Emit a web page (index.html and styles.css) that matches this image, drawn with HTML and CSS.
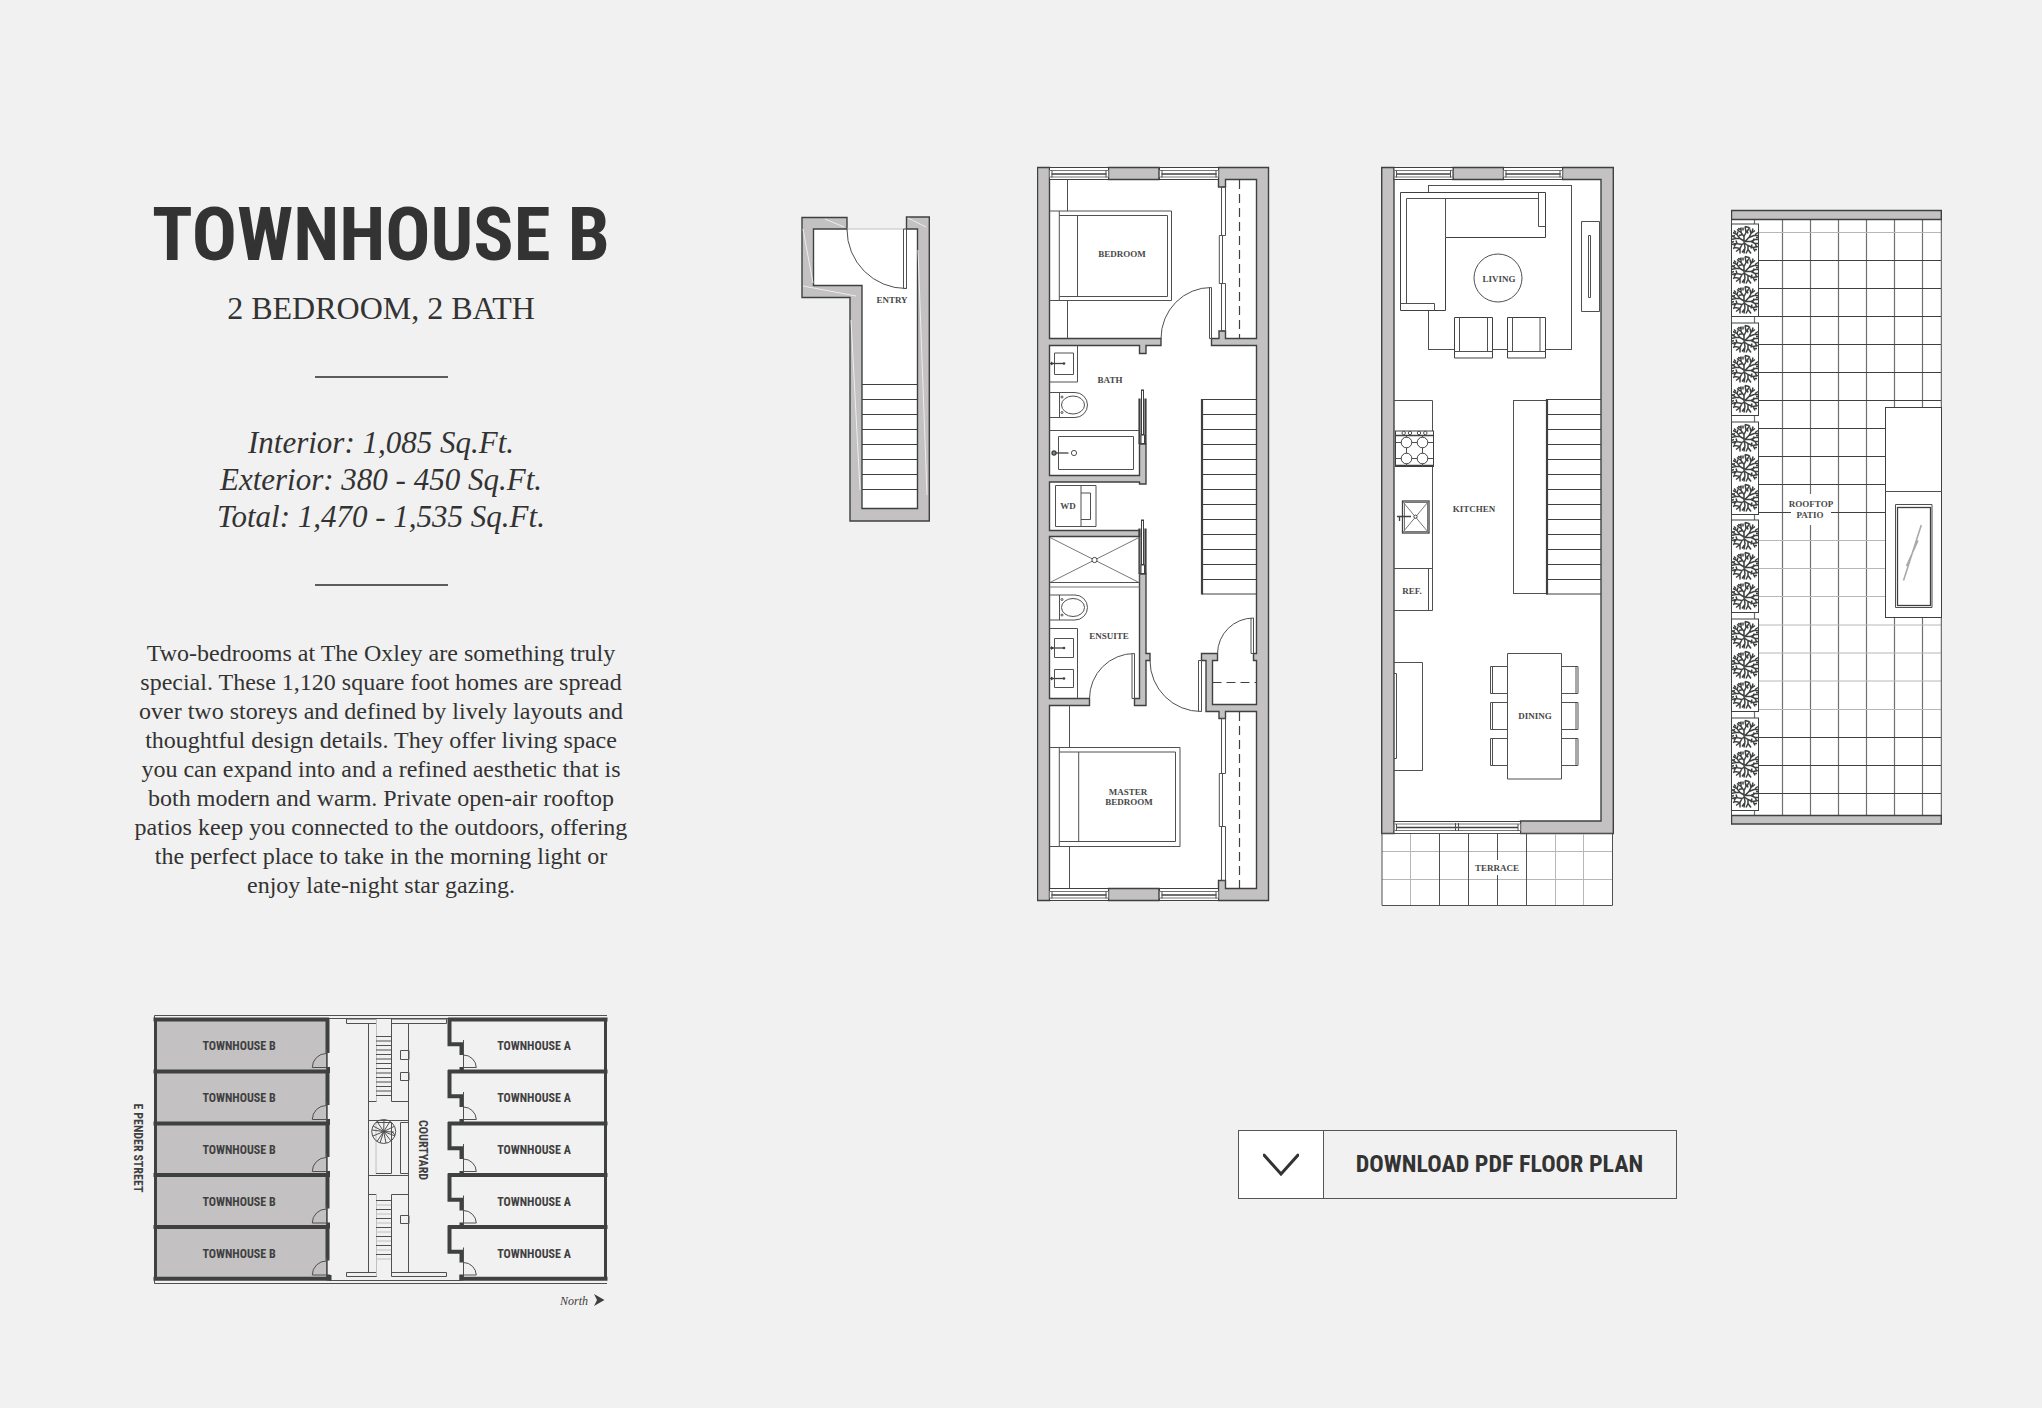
FILE: index.html
```html
<!DOCTYPE html>
<html lang="en">
<head>
<meta charset="utf-8">
<meta name="viewport" content="width=device-width, initial-scale=1">
<title>Townhouse B – The Oxley</title>
<link rel="stylesheet" href="styles.css">
</head>
<body>
<main class="page">
  <section class="summary">
    <h1 class="title">TOWNHOUSE B</h1>
    <p class="subtitle">2 BEDROOM, 2 BATH</p>
    <hr class="rule">
    <ul class="areas">
      <li>Interior: 1,085 Sq.Ft.</li>
      <li>Exterior: 380 - 450 Sq.Ft.</li>
      <li>Total: 1,470 - 1,535 Sq.Ft.</li>
    </ul>
    <hr class="rule">
    <p class="description">Two-bedrooms at The Oxley are something truly special. These 1,120 square foot homes are spread over two storeys and defined by lively layouts and thoughtful design details. They offer living space you can expand into and a refined aesthetic that is both modern and warm. Private open-air rooftop patios keep you connected to the outdoors, offering the perfect place to take in the morning light or enjoy late-night star gazing.</p>

    <svg class="sitemap" viewBox="100 1010 562 300" role="img" aria-label="Site map">
      <defs>
        <g id="unit-b">
          <rect class="wall" x="156" y="1020" width="171" height="51"/>
          <path class="heavy" d="M153.500 1019.500H329M327.500 1018V1053M328 1067V1073"/>
          <path class="thin" d="M326.500 1050V1070M312.300 1067.500H327M312.300 1067.500A14 14 0 0 1 326.500 1053.500"/>
          <text class="unit" x="239" y="1050">TOWNHOUSE B</text>
        </g>
        <g id="unit-a">
          <path class="heavy" d="M448 1019.500H607.500M449.500 1018V1044.300H461.500V1055M461.500 1067V1073"/>
          <path class="thin" d="M463.500 1040V1071M463.500 1067.500H476.300A13 13 0 0 0 463.500 1055"/>
          <text class="unit" x="534" y="1050">TOWNHOUSE A</text>
        </g>
      </defs>
      <path class="thin" d="M607 1015.500H154.500V1283.500H607M329 1018.500H448M329 1280.500H460"/>
      <use href="#unit-b"/><use href="#unit-b" y="52"/><use href="#unit-b" y="104"/><use href="#unit-b" y="155.500"/><use href="#unit-b" y="207.500"/>
      <use href="#unit-a"/><use href="#unit-a" y="52"/><use href="#unit-a" y="104"/><use href="#unit-a" y="155.500"/><use href="#unit-a" y="207.500"/>
      <path class="heavy" d="M153.500 1278.700H329.500V1275M607.500 1278.700H461.500V1275"/>
      <path class="side" d="M155.500 1018V1280M605.500 1018V1280"/>
      <path class="thin" d="M346.500 1019H376.500V1023.500H346.500ZM391.500 1019H446.500V1023.500H391.500ZM346.500 1272.500H376.500V1276.500H346.500ZM391.500 1272.500H446.500V1276.500H391.500Z"/>
      <path class="thin" d="M368.500 1023.500V1272.500M408.500 1023.500V1272.500M391.500 1019V1101.500M391.500 1194.500V1276M368.500 1101.500H376.500M391.500 1101.500H408.500M368.500 1120.500H408.500M368.500 1175.500H408.500M368.500 1194.500H376.500M391.500 1194.500H408.500"/>
      <path class="faint" d="M376.500 1019V1101M376.500 1194V1276M376 1205H391M376 1214H391M376 1223H391M376 1232H391M376 1241H391M376 1250H391M376 1259H391M376 1122.500V1173.500"/>
      <path class="thin" d="M376 1036.500H391M376 1041H391M376 1045.500H391M376 1050H391M376 1054.500H391M376 1059H391M376 1063.500H391M376 1068.500H391M376 1073H391M376 1077.500H391M376 1082H391M376 1086.500H391M376 1091H391M376 1095.500H391M376 1200.500H391M376 1209.500H391M376 1218.500H391M376 1227.500H391M376 1236.500H391M376 1245.500H391M376 1254.500H391"/>
      <path class="thin" d="M400.500 1050.500H409V1059.500H400.500ZM400.500 1072.500H409V1080.500H400.500ZM400.500 1215.500H409V1223.500H400.500ZM400.500 1122.500H408.500V1173.500H400.500ZM376 1122.500H391.500V1173.500H376"/>
      <circle class="thin" cx="383.700" cy="1131.500" r="12"/>
      <path class="thin" d="M383.700 1131.500L384 1119.500M383.700 1131.500L390 1121.500M383.700 1131.500L377 1121.500M383.700 1131.500L373 1126M383.700 1131.500L372 1130M383.700 1131.500L373 1136M383.700 1131.500L377 1141.500M383.700 1131.500L380 1143M383.700 1131.500L386 1143M383.700 1131.500L391 1141M383.700 1131.500L395 1136M383.700 1131.500L394 1132M383.700 1131.500L394 1126.500M391 1131L395 1135"/>
      <text class="unit" transform="translate(418.500 1150) rotate(90)">COURTYARD</text>
      <text class="unit" transform="translate(134 1148) rotate(90)">E PENDER STREET</text>
      <text class="north" x="574" y="1305">North</text>
      <path class="ink" d="M594 1294L604.500 1300L594 1306L597 1300Z"/>
    </svg>
  </section>

  <section class="floors">
    <div class="plans">
      <svg class="plan plan-entry" viewBox="801 160 129 750" role="img" aria-label="Entry level">
        <path class="floor" d="M813 229H918V509H862V285.500H813Z"/>
        <path class="wall" d="M802 217.500H847V229H813.500V285.500H862V508.500H917.500V229H906.500V217H929.300V521H850V297.500H802Z"/>
        <path class="glint" d="M825 219L844 227M908 218L926 227M803 229L813 283M803 286L856 296M851 320L860 490M918 250L927 495"/>
        <path class="faint" d="M847 229H906"/>
        <path class="thin" d="M847 229A59 59 0 0 0 906.500 288.500M903.500 229H906.500V288.500H903.500Z"/>
        <path class="step" d="M862 384.500H917.500M862 399.500H917.500M862 414.500H917.500M862 429.500H917.500M862 444.500H917.500M862 459.500H917.500M862 474.500H917.500M862 489.500H917.500"/>
        <text class="room" x="892" y="303">ENTRY</text>
      </svg>

      <svg class="plan plan-lower" viewBox="1037 160 237 750" role="img" aria-label="Bedroom level">
        <defs>
          <g id="window">
            <rect class="pane" x="0" y="0" width="59" height="12"/>
            <rect class="hair" x="0" y="3" width="59" height="6.500"/>
            <path class="line" d="M2 6.500H57"/>
            <path class="thin" d="M2.500 3V10M56.500 3V10"/>
          </g>
          <g id="toilet">
            <path class="thin" d="M1049.500 392.500H1075A12.500 12.500 0 0 1 1075 417.500H1049.500M1059.500 392.500V417.500"/>
            <ellipse class="thin" cx="1073" cy="405" rx="11.500" ry="9"/>
            <circle class="thin" cx="1062" cy="397" r="1"/><circle class="thin" cx="1062" cy="412.500" r="1"/>
          </g>
          <g id="faucet">
            <path class="line" d="M0 0H14"/><path class="ink" d="M1 -2L4 0L1 2Z"/><circle class="ink" cx="14" cy="0" r="1.300"/>
          </g>
          <g id="pocket">
            <path class="bar" d="M1139.500 398.500V444M1145.500 398.500V444"/>
            <rect class="obj" x="1141.500" y="390" width="2" height="45"/>
            <rect class="obj" x="1141" y="435" width="3.500" height="8.500"/>
          </g>
        </defs>
        <rect class="floor" x="1049" y="168" width="208" height="732"/>
        <path class="wall" d="M1037.500 167.500H1049.500V338.500H1161V345.500H1146V353.500H1139.500V345.500H1049.500V475.500H1139.500V444H1146V484H1139.500V482H1049.500V530.500H1139.500V536.500H1049.500V698.500H1089.500V705.500H1049.500V900.500H1037.500Z"/>
        <path class="wall" d="M1139.500 574H1146V653.500H1150V660.500H1146V705.500H1134.500V698.500H1139.500Z"/>
        <path class="wall" d="M1218.500 167.500H1268.500V900.500H1218.500V880.500H1225.500V888.500H1256.500V711.500H1225.500V718.500H1219V711.500H1206V660.500H1201.500V653.500H1217.500V660.500H1212.500V704.500H1256.500V660.500H1253.500V653.500H1256.500V345.500H1211.500V338.500H1219V331H1225.500V338.500H1256.500V179.500H1225.500V187H1218.500Z"/>
        <path class="wall" d="M1108.500 167.500H1159V179.500H1108.500ZM1108.500 888.500H1159V900.500H1108.500Z"/>
        <use href="#window" x="1049.500" y="167.500"/><use href="#window" x="1159.500" y="167.500"/>
        <use href="#window" x="1049.500" y="888.500"/><use href="#window" x="1159.500" y="888.500"/>
        <use href="#pocket"/><use href="#pocket" y="130"/>
        <path class="thin" d="M1067.500 179.500V211M1067.500 300.500V338.500M1049.500 211H1171.500V300.500H1049.500M1059.300 211V300.500M1059.300 215.500H1167.500V296.500H1059.300M1077.500 215.500V296.500"/>
        <path class="thin" d="M1069.500 705.500V747.500M1069.500 846.500V888.500M1049.500 747.500H1180V846.500H1049.500M1059.300 747.500V846.500M1059.300 752H1175.500V841.500H1059.300M1078.700 752V841.500"/>
        <path class="thin" d="M1221.500 187H1225.500V235.500H1221.500ZM1219.300 235.500H1222.500V283.500H1219.300ZM1221.500 283.500H1225.500V331H1221.500ZM1221.500 718.500H1225.500V773.500H1221.500ZM1219.300 773.500H1222.500V826.500H1219.300ZM1221.500 826.500H1225.500V880.500H1221.500Z"/>
        <path class="dash" d="M1239.500 180V338M1239.500 712V888M1212.500 682.500H1256"/>
        <path class="thin" d="M1161 338.500A50 51 0 0 1 1211.500 287.500V338.500H1209.500V287.500M1089.500 698.500A45 45 0 0 1 1134.500 653.500V698.500H1132V653.500M1150 660.500A51 51 0 0 0 1201.500 711.500V660.500H1198.500V711.500M1217.500 653.500A36 36 0 0 1 1253.500 618V653.500H1251V618"/>
        <path class="thin" d="M1049.500 382H1077.500V345.500M1054.500 353H1073.500V374.500H1054.500ZM1049.500 430.500H1139.500M1058.500 436.500H1133.500V469.500H1058.500Z"/>
        <use href="#toilet"/><use href="#toilet" y="202.500"/>
        <use href="#faucet" x="1050" y="363.500"/><use href="#faucet" x="1050" y="648"/><use href="#faucet" x="1050" y="678.500"/>
        <path class="line" d="M1052 453H1068.500"/><circle class="line" cx="1054" cy="453" r="2"/><circle class="thin" cx="1074" cy="453" r="2.600"/>
        <path class="thin" d="M1055.500 485.500H1096V526.500H1055.500ZM1081 485.500V526.500M1081 493H1090.500V519.500H1081"/>
        <path class="hair" d="M1050 537.500L1139 582.500M1139 537.500L1050 582.500M1049.500 587H1139.500"/>
        <path class="thin" d="M1049.500 582.500H1139.500V537"/>
        <circle class="obj" cx="1094.500" cy="560" r="2.600"/>
        <path class="thin" d="M1049.500 628.500H1077.500V698.500M1054.500 638.500H1073.500V657.500H1054.500ZM1054.500 669.500H1073.500V687.500H1054.500Z"/>
        <path class="step" d="M1201.500 399.500H1256.500M1202 414.500H1256.500M1202 429.500H1256.500M1202 444.500H1256.500M1202 459.500H1256.500M1202 474.500H1256.500M1202 489.500H1256.500M1202 504.500H1256.500M1202 519.500H1256.500M1202 534.500H1256.500M1202 549.500H1256.500M1202 564.500H1256.500M1202 579.500H1256.500M1202 594H1256.500"/>
        <path class="bar" d="M1202 399V594.500"/>
        <text class="room" x="1122" y="257">BEDROOM</text>
        <text class="room" x="1110" y="383">BATH</text>
        <text class="room" x="1068" y="509">WD</text>
        <text class="room" x="1109" y="639">ENSUITE</text>
        <text class="room" x="1128" y="795">MASTER</text>
        <text class="room" x="1129" y="805">BEDROOM</text>
      </svg>

      <svg class="plan plan-main" viewBox="1381 160 243 750" role="img" aria-label="Main level">
        <rect class="floor" x="1393" y="168" width="209" height="665"/>
        <rect class="floor" x="1382" y="833" width="231" height="72.500"/>
        <path class="wall" d="M1381.700 167.500H1394V833.500H1381.700ZM1453 167.500H1503.500V179.500H1453ZM1562.500 167.500H1613.300V833.500H1520.500V821H1601V179.500H1562.500Z"/>
        <use href="#window" x="1394" y="167.500"/><use href="#window" x="1503.500" y="167.500"/>
        <rect class="pane" x="1394" y="821.500" width="126.500" height="12"/>
        <rect class="hair" x="1394" y="824" width="126.500" height="6.500"/>
        <path class="line" d="M1396 827.500H1518"/>
        <path class="thin" d="M1396.500 824V831M1455.500 823V831M1458.500 823V831M1518 824V831"/>
        <rect class="thin" x="1428.500" y="185.500" width="143" height="164"/>
        <path class="obj" d="M1400.500 192.500H1545.500V237.500H1445.500V310.500H1400.500Z"/>
        <path class="thin" d="M1406.500 303.500V198.500H1538.500M1445.500 198.500V237.500M1538.500 192.500V226.500H1545.500M1400.500 303.500H1434.500V310.500"/>
        <circle class="thin" cx="1498" cy="278" r="24"/>
        <path class="thin" d="M1581.500 221.500H1599.500V311.500H1581.500ZM1588.500 235.500H1590.500V297.500H1588.500Z"/>
        <path class="obj" d="M1454.500 317.500H1492.500V358H1454.500ZM1507.500 317.500H1545.500V358H1507.500Z"/>
        <path class="thin" d="M1454.500 351.500H1492.500M1459.500 317.500V351.500M1487.500 317.500V351.500M1507.500 351.500H1545.500M1512.500 317.500V351.500M1540 317.500V351.500"/>
        <path class="thin" d="M1394 400.500H1432.500V610.500H1394M1394 568.500H1432.500M1428.500 568.500V610.500"/>
        <rect class="obj" x="1395.500" y="431" width="38" height="35.500"/>
        <path class="line" d="M1395.500 435.500H1433.500M1395.500 465.500H1433.500"/>
        <path class="thin" d="M1396 442.500H1433M1396 458.500H1433M1406.500 436V466M1422.500 436V466"/>
        <circle class="obj" cx="1406.500" cy="442.500" r="5.300"/><circle class="obj" cx="1422.500" cy="442.500" r="5.300"/><circle class="obj" cx="1406.500" cy="458.500" r="5.300"/><circle class="obj" cx="1422.500" cy="458.500" r="5.300"/>
        <circle class="thin" cx="1403.700" cy="433" r="1.700"/><circle class="thin" cx="1410" cy="433" r="1.700"/><circle class="thin" cx="1419" cy="433" r="1.700"/><circle class="thin" cx="1425.300" cy="433" r="1.700"/>
        <rect class="line" x="1402.500" y="501" width="26.500" height="32"/>
        <path class="hair" d="M1403 502L1428 532M1428 502L1403 532M1404.500 502.500H1427.500V531.500H1404.500Z"/>
        <circle class="obj" cx="1415.500" cy="516.700" r="1.600"/>
        <path class="line" d="M1397 516.500H1411M1399.500 517V521"/>
        <rect class="thin" x="1513.500" y="400.500" width="33.500" height="193"/>
        <path class="step" d="M1546 399.500H1601M1546 414.500H1601M1546 429.500H1601M1546 444.500H1601M1546 459.500H1601M1546 474.500H1601M1546 489.500H1601M1546 504.500H1601M1546 519.500H1601M1546 534.500H1601M1546 549.500H1601M1546 564.500H1601M1546 579.500H1601M1546 594H1601"/>
        <path class="bar" d="M1547 399V594.500"/>
        <path class="thin" d="M1394 662.500H1422.500V770.500H1394M1394 673.500H1396.500V758.500H1394"/>
        <path class="thin" d="M1507.500 653.500H1561.500V779H1507.500ZM1507.500 666.500H1490.500V693.500H1507.500M1507.500 702.500H1490.500V729.500H1507.500M1507.500 738.500H1490.500V765.500H1507.500M1561.500 666.500H1578V693.500H1561.500M1561.500 702.500H1578V729.500H1561.500M1561.500 738.500H1578V765.500H1561.500M1492.500 666.500V693.500M1492.500 702.500V729.500M1492.500 738.500V765.500M1576 666.500V693.500M1576 702.500V729.500M1576 738.500V765.500"/>
        <path class="pale" d="M1382 851.500H1613M1382 879.500H1613M1410.500 834V905M1555.500 834V905M1583.500 834V905"/>
        <path class="thin" d="M1382 833.500H1612.500V905.500H1382ZM1439.500 834V905M1468.500 834V905M1497.500 834V860M1497.500 875V905M1526.500 834V905"/>
        <text class="room" x="1499" y="282">LIVING</text>
        <text class="room" x="1474" y="512">KITCHEN</text>
        <text class="room" x="1412" y="594">REF.</text>
        <text class="room" x="1535" y="719">DINING</text>
        <text class="room" x="1497" y="871">TERRACE</text>
      </svg>

      <svg class="plan plan-roof" viewBox="1731 160 211 750" role="img" aria-label="Rooftop">
        <defs>
          <g id="shrub">
            <path d="M-1 13L0 7L-1 1L-1 -4L-4 -8L-4 -13M-1 -4L1 -8L0 -14M1 -8L5 -13M-4 -8L-8 -11M0 1L4 -3L9 -5L13 -5M4 -3L6 -7L5 -11M6 -7L10 -10M0 1L-5 -2L-9 -2L-13 -5M-9 -2L-14 -1M-5 -2L-8 -6L-12 -8M-8 -6L-7 -9M0 1L6 1L10 -1L14 -1M6 1L10 3L14 3M10 3L12 7M0 3L3 5L8 7L10 11M3 5L3 9L6 13M0 2L-3 4L-9 3L-13 4M-3 4L-5 8L-10 7L-12 8M-5 8L-5 13M-5 8L-9 11M8 7L13 6M-9 3L-11 6M-2 -6L-6 -5M0 -14L4 -13M-7 -12L-4 -11M8 -12L7 -8M13 -8L10 -6M-13 -4L-10 -5M-9 0L-8 3M7 4L6 8M0 8L-3 12M3 9L1 13M9 -2L8 1M-14 2L-11 1M-11 -10L-9 -8M2 -10L3 -7M-2 -10L-2 -13M11 -3L14 -3M12 9L9 9"/>
          </g>
          <g id="planter">
            <rect class="obj" x="1731.500" y="224" width="27" height="92.500"/>
            <use class="twig" href="#shrub" x="1745" y="240.500"/><use class="twig" href="#shrub" x="1745" y="270.500"/><use class="twig" href="#shrub" x="1745" y="300.500"/>
          </g>
        </defs>
        <rect class="floor" x="1731.500" y="210" width="210" height="614"/>
        <path class="tile" d="M1754.500 220V815M1782.500 220V815M1810.500 220V494M1810.500 525V815M1838.500 220V815M1866.500 220V815M1894.500 220V815M1922.500 220V815"/>
        <path class="pale" d="M1758 232.500H1941M1758 540.500H1941M1758 568.500H1941M1758 596.500H1941M1758 625H1941M1758 653H1941M1758 681H1941M1758 709.500H1941"/>
        <path class="step" d="M1758 260.500H1941M1758 288.500H1941M1758 316.500H1941M1758 344.500H1941M1758 372.500H1941M1758 400.500H1941M1758 428.500H1941M1758 456.500H1941M1758 484.500H1941M1758 512.500H1791M1831 512.500H1941M1758 737.500H1941M1758 765.500H1941M1758 793.500H1941"/>
        <path class="thin" d="M1731.500 210V824M1941.300 210V824"/>
        <path class="wall" d="M1731.500 210.500H1941.300V219.500H1731.500ZM1731.500 815.500H1941.300V824H1731.500Z"/>
        <use href="#planter"/><use href="#planter" y="99"/><use href="#planter" y="198"/><use href="#planter" y="296"/><use href="#planter" y="395"/><use href="#planter" y="494"/>
        <rect class="obj" x="1885.500" y="407.500" width="56" height="210"/>
        <path class="thin" d="M1885.500 491.500H1941.500M1895.500 504.500H1932V607.500H1895.500Z"/>
        <rect class="line" x="1897.500" y="507.500" width="33" height="98"/>
        <path class="glass" d="M1921.300 525L1903.500 580.500M1918 540.500L1906.500 566"/>
        <text class="room" x="1811" y="507">ROOFTOP</text>
        <text class="room" x="1810" y="518">PATIO</text>
      </svg>
    </div>

    <div class="actions">
      <a class="download" href="#floor-plan-pdf">
        <span class="download-icon"><svg width="36" height="24" viewBox="0 0 36 24" aria-hidden="true"><path d="M1 2L18 21L35 2"/></svg></span>
        <span class="download-label">DOWNLOAD PDF FLOOR PLAN</span>
      </a>
    </div>
  </section>
</main>
</body>
</html>
```
FILE: styles.css
```css
:root {
  --ink: #333;
  --draw: #3f4040;
  --paper: #f1f1f1;
  --wall: #c3c1c2;
  --serif: "Liberation Serif", serif;
  --narrow: "Liberation Sans Narrow", "Roboto Condensed", "Liberation Sans", sans-serif;
}

* { box-sizing: border-box; }

body {
  margin: 0;
  background: var(--paper);
  color: var(--ink);
  font-family: var(--serif);
}

.page {
  display: grid;
  grid-template-columns: 562px 1fr;
  column-gap: 139px;
  padding: 160px 100px 98px;
}

.summary {
  display: flex;
  flex-direction: column;
  align-items: center;
  padding-top: 34px;
  text-align: center;
}

.title {
  margin: 0 0 14px;
  font: bold 75px/80px var(--narrow);
}

.subtitle {
  margin: 0 0 48px;
  font-size: 32px;
  line-height: 40px;
}

.rule {
  width: 133px;
  height: 2px;
  margin: 0;
  border: 0;
  background: #5c5c5c;
}

.areas {
  margin: 46px 0 49px;
  padding: 0;
  list-style: none;
  font-size: 31px;
  font-style: italic;
  line-height: 37px;
}

.description {
  max-width: 504px;
  margin: 53px 0 110px;
  font-size: 24px;
  line-height: 29px;
}

.sitemap {
  display: block;
  width: 100%;
  height: auto;
}

.plans {
  display: flex;
  justify-content: space-between;
}

.plan { display: block; height: 750px; }
.plan-entry { width: 129px; }
.plan-lower { width: 237px; }
.plan-main { width: 243px; }
.plan-roof { width: 211px; }

.actions {
  display: flex;
  justify-content: center;
  margin-top: 220px;
  padding-left: 171px;
}

.download {
  display: flex;
  width: 439px;
  height: 69px;
  border: 1px solid #555;
  color: var(--ink);
  font: bold 24px/67px var(--narrow);
  text-decoration: none;
}

.download-icon {
  display: flex;
  flex: 0 0 85px;
  align-items: center;
  justify-content: center;
  border-right: 1px solid #555;
  background: #fff;
}

.download-icon path {
  fill: none;
  stroke: var(--ink);
  stroke-width: 3;
  stroke-linecap: round;
}

.download-label {
  flex: 1;
  text-align: center;
}

/* drawing styles */
.floor { fill: #fff; }
.wall { fill: var(--wall); stroke: var(--draw); stroke-width: 1.4; }
.obj { fill: #fff; stroke: var(--draw); stroke-width: 1; }
.pane { fill: #fff; stroke: var(--draw); stroke-width: 1; }
.thin { fill: none; stroke: #505050; stroke-width: 1; }
.hair { fill: none; stroke: #777; stroke-width: 1; }
.line { fill: none; stroke: var(--draw); stroke-width: 1.3; }
.step { fill: none; stroke: var(--draw); stroke-width: 1; }
.bar { fill: none; stroke: var(--draw); stroke-width: 2.2; }
.tile { fill: none; stroke: #707070; stroke-width: 1.2; }
.glass { fill: none; stroke: #aaa; stroke-width: 1.6; }
.pale { fill: none; stroke: #b5b8b6; stroke-width: 1; }
.faint { fill: none; stroke: #c0c0c0; stroke-width: 1; }
.glint { fill: none; stroke: #eee; stroke-width: 1; }
.dash { fill: none; stroke: var(--draw); stroke-width: 1.2; stroke-dasharray: 9 5; }
.heavy { fill: none; stroke: var(--draw); stroke-width: 4; }
.side { fill: none; stroke: var(--draw); stroke-width: 3; }
.twig { fill: none; stroke: var(--draw); stroke-width: 1.5; }
.ink { fill: var(--draw); }

.room {
  fill: #484848;
  font: bold 9px var(--serif);
  text-anchor: middle;
}

.unit {
  fill: var(--draw);
  font: bold 12px var(--narrow);
  text-anchor: middle;
}

.north {
  fill: var(--draw);
  font: italic 12px var(--serif);
  text-anchor: middle;
}

@media (max-width: 1600px) {
  .page {
    grid-template-columns: minmax(0, 1fr);
    row-gap: 80px;
    padding: 80px 24px;
  }
  .sitemap { max-width: 562px; }
  .plans { flex-wrap: wrap; gap: 40px; justify-content: center; }
  .actions { margin-top: 80px; padding-left: 0; }
}
```
